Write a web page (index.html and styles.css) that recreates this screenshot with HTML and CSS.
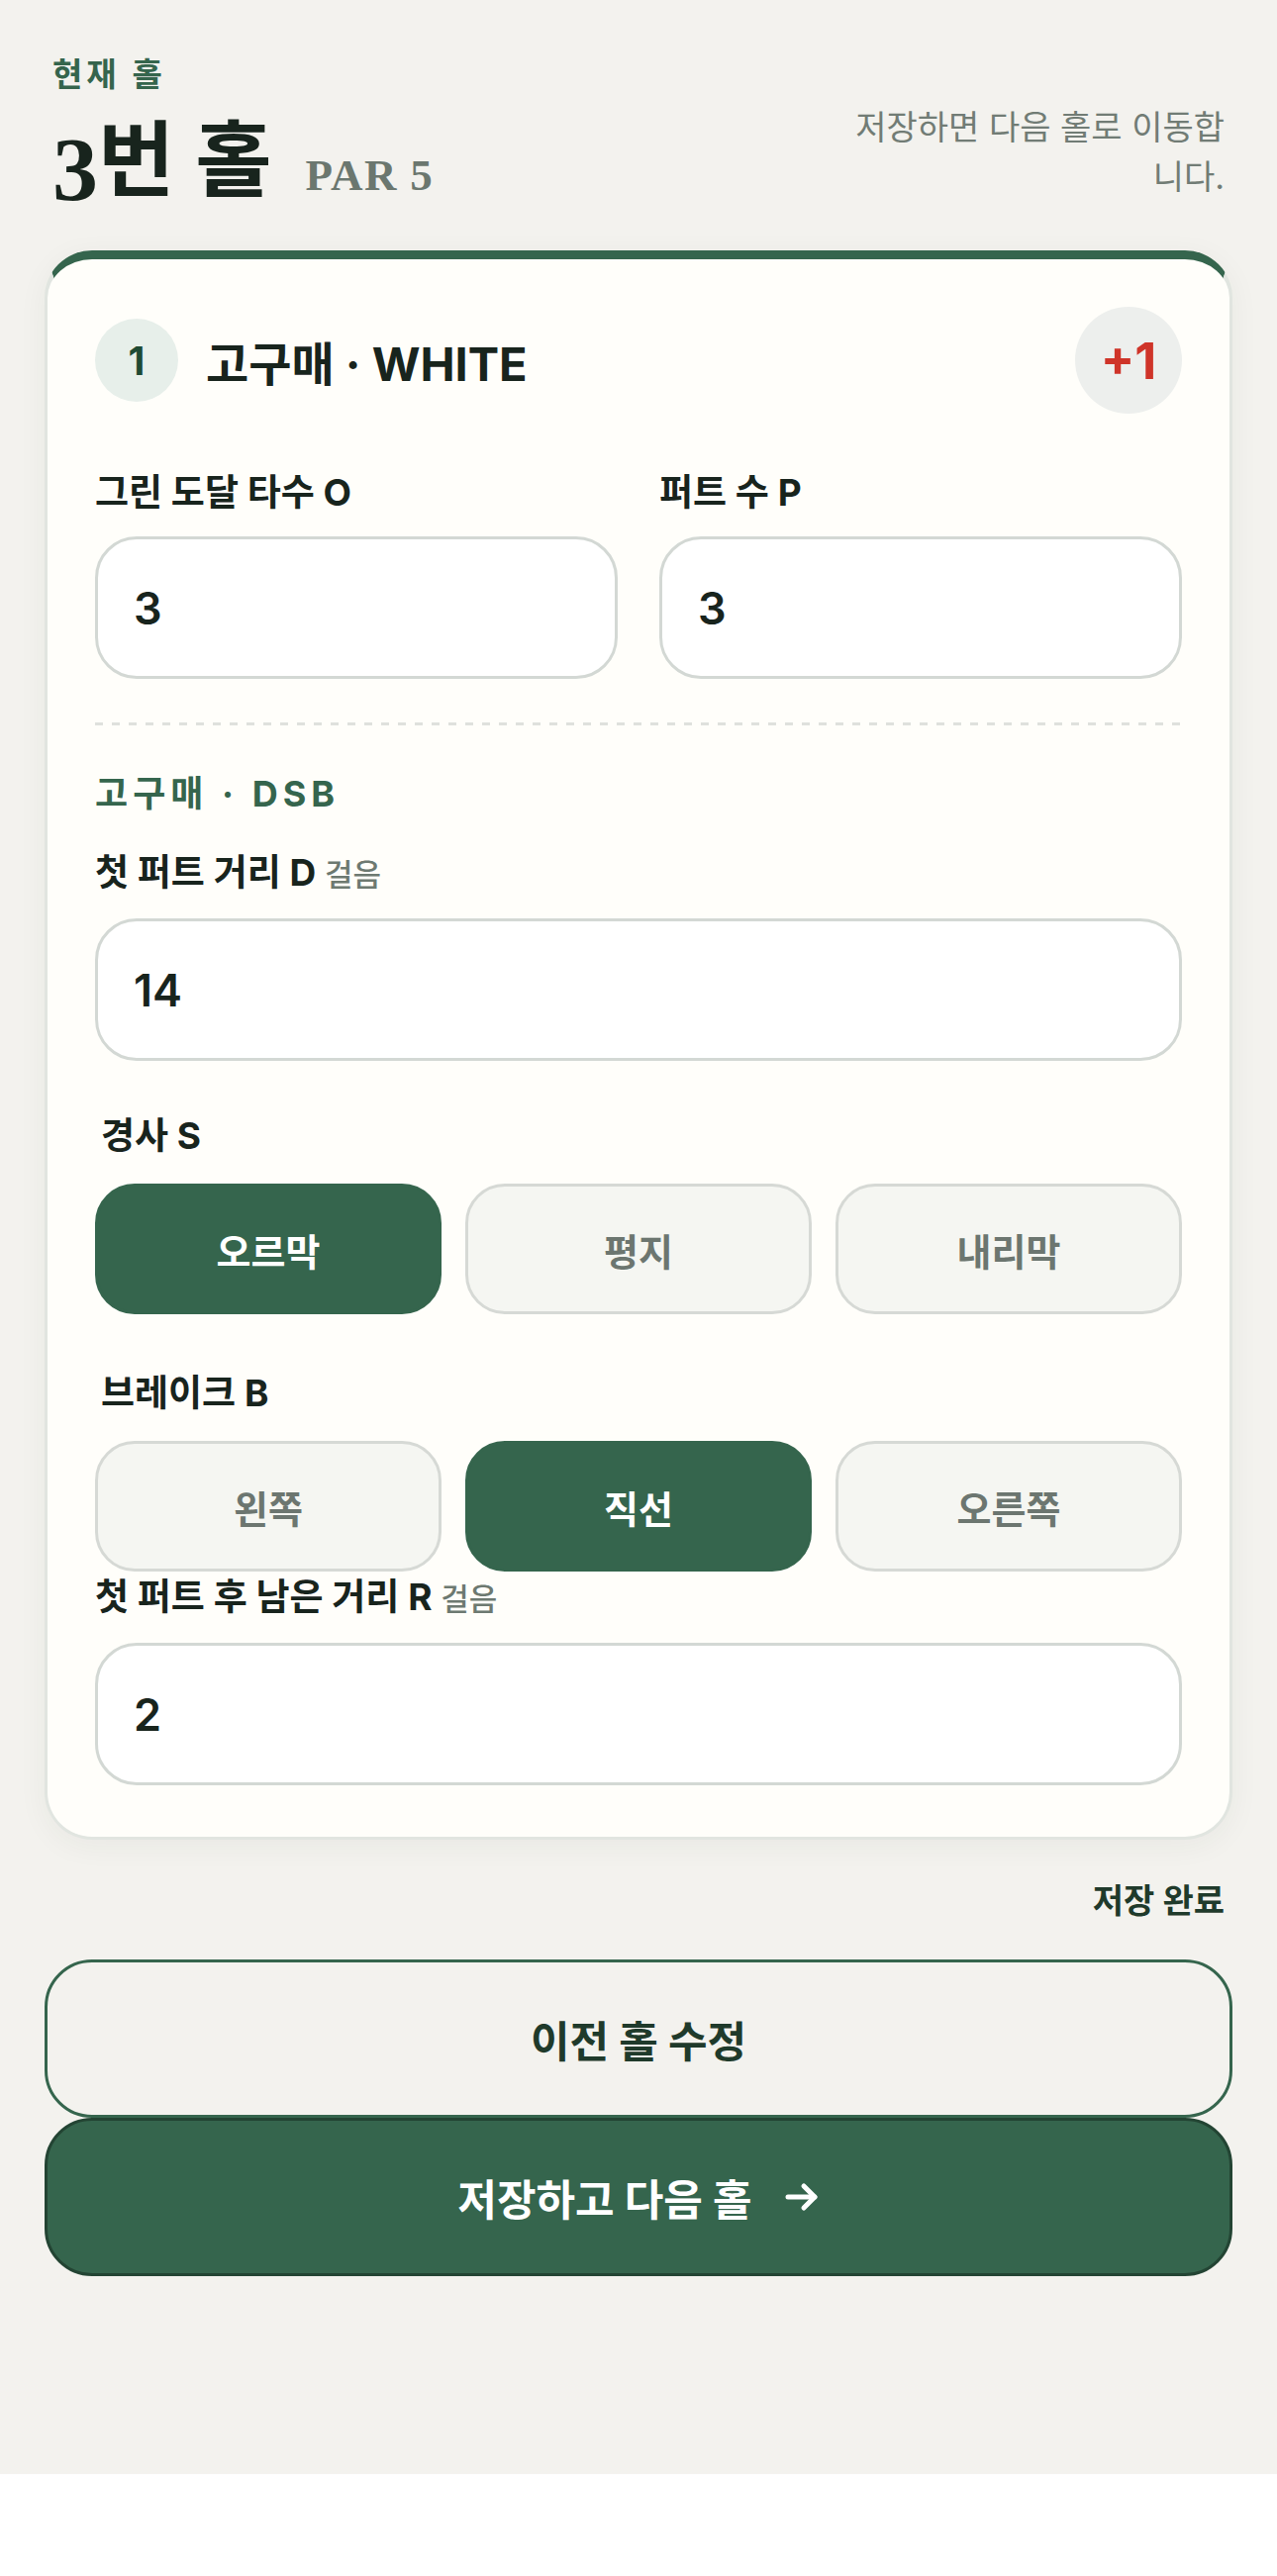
FILE: index.html
```html
<!DOCTYPE html>
<html lang="ko">
<head>
	<meta charset="UTF-8">
	<title>3번 홀</title>
	<link rel="stylesheet" href="styles.css">
</head>
<body>
	<div class="page">
		<header class="head">
			<div class="head-left">
				<div class="eyebrow">현재 홀</div>
				<h1 class="title"><span class="title-num">3</span>번 홀<span class="par">PAR 5</span></h1>
			</div>
			<p class="hint">저장하면 다음 홀로 이동합니다.</p>
		</header>

		<section class="card">
			<div class="player">
				<span class="player-no">1</span>
				<span class="player-name">고구매 · WHITE</span>
				<span class="player-diff">+1</span>
			</div>

			<div class="pair">
				<div class="field">
					<label class="label" for="gir">그린 도달 타수 O</label>
					<input class="input" type="text" id="gir" value="3">
				</div>
				<div class="field">
					<label class="label" for="putts">퍼트 수 P</label>
					<input class="input" type="text" id="putts" value="3">
				</div>
			</div>

			<div class="divider"></div>

			<div class="section-title">고구매 · DSB</div>

			<div class="field field-d">
				<label class="label" for="dist">첫 퍼트 거리 D <span class="unit">걸음</span></label>
				<input class="input" type="text" id="dist" value="14">
			</div>

			<div class="field field-s">
				<div class="label label-seg">경사 S</div>
				<div class="seg">
					<button class="seg-btn active">오르막</button>
					<button class="seg-btn">평지</button>
					<button class="seg-btn">내리막</button>
				</div>
			</div>

			<div class="field field-b">
				<div class="label label-seg">브레이크 B</div>
				<div class="seg">
					<button class="seg-btn">왼쪽</button>
					<button class="seg-btn active">직선</button>
					<button class="seg-btn">오른쪽</button>
				</div>
			</div>

			<div class="field field-r">
				<label class="label" for="rest">첫 퍼트 후 남은 거리 R <span class="unit">걸음</span></label>
				<input class="input" type="text" id="rest" value="2">
			</div>
		</section>

		<div class="status">저장 완료</div>

		<button class="btn btn-outline">이전 홀 수정</button>
		<button class="btn btn-primary">저장하고 다음 홀
			<svg class="arrow" width="36" height="30" viewBox="0 0 36 30" fill="none" stroke="#fff" stroke-width="5" stroke-linecap="round" stroke-linejoin="round">
				<path d="M4 15h27"/>
				<path d="M20 4l11 11-11 11"/>
			</svg>
		</button>
	</div>
</body>
</html>
```

FILE: styles.css
```css
* {
	margin: 0;
	padding: 0;
	box-sizing: border-box;
}

html,
body {
	background: #fff;
}

body {
	font-family: "Inter", "Noto Sans CJK KR", sans-serif;
	color: #18241d;
}

.page {
	background: #f3f2ee;
	padding: 53px 45px 200px;
}

/* 상단 */
.head {
	display: flex;
	justify-content: space-between;
	align-items: flex-end;
	padding: 0 8px;
}

.eyebrow {
	font-size: 33px;
	line-height: 44px;
	font-weight: 700;
	letter-spacing: 0.12em;
	color: #35654d;
}

.title {
	margin-top: 21px;
	font-family: "Liberation Serif", "Noto Sans CJK KR", serif;
	font-size: 84px;
	line-height: 92px;
	font-weight: 700;
	color: #18241d;
}

/* 숫자는 올드스타일처럼 살짝 내려앉게 */
.title .title-num {
	font-size: 92px;
	line-height: 0;
	vertical-align: -10px;
}

.title .par {
	margin-left: 34px;
	font-size: 45px;
	line-height: 1;
	letter-spacing: 0.03em;
	color: #6b776f;
}

.hint {
	width: 390px;
	margin-bottom: 6px;
	text-align: right;
	font-size: 34px;
	line-height: 50px;
	color: #717c75;
}

/* 카드 */
.card {
	margin-top: 43px;
	background: #fffefa;
	border: 3px solid #e1e5e0;
	border-top: 9px solid #35654d;
	border-radius: 48px;
	padding: 48px 48px 52px;
	box-shadow: 0 6px 30px rgba(40, 50, 40, 0.05);
}

.player {
	display: flex;
	align-items: center;
	height: 108px;
}

.player-no {
	width: 84px;
	height: 84px;
	border-radius: 50%;
	background: #e7efea;
	color: #1f4a33;
	font-size: 39px;
	font-weight: 700;
	display: flex;
	align-items: center;
	justify-content: center;
}

.player-name {
	margin-left: 28px;
	font-size: 47px;
	font-weight: 700;
}

.player-diff {
	margin-left: auto;
	width: 108px;
	height: 108px;
	border-radius: 50%;
	background: #edefed;
	color: #cf3429;
	font-size: 51px;
	font-weight: 700;
	display: flex;
	align-items: center;
	justify-content: center;
}

.pair {
	display: grid;
	grid-template-columns: 1fr 1fr;
	gap: 42px;
	margin-top: 56px;
}

.label {
	display: block;
	font-size: 37px;
	line-height: 48px;
	font-weight: 700;
	margin-bottom: 20px;
}

.label .unit {
	font-size: 31px;
	font-weight: 500;
	color: #6d7971;
}

.label-seg {
	padding-left: 6px;
	margin-bottom: 24px;
}

.input {
	display: block;
	width: 100%;
	height: 144px;
	border: 3px solid #d3d8d4;
	border-radius: 42px;
	background: #fff;
	padding: 0 36px;
	font-family: inherit;
	font-size: 45px;
	font-weight: 600;
	color: #18241d;
	outline: none;
}

.divider {
	margin-top: 44px;
	height: 3px;
	background: repeating-linear-gradient(90deg, #dfe1dd 0 8px, transparent 8px 17px);
}

.section-title {
	margin-top: 45px;
	font-size: 36px;
	line-height: 48px;
	font-weight: 700;
	letter-spacing: 0.14em;
	color: #35654d;
}

.field-d {
	margin-top: 32px;
}

.field-s {
	margin-top: 52px;
}

.field-b {
	margin-top: 56px;
}

.field-r {
	margin-top: 2px;
}

.seg {
	display: grid;
	grid-template-columns: repeat(3, 1fr);
	gap: 24px;
}

.seg-btn {
	height: 132px;
	border: 3px solid #d6d9d5;
	border-radius: 40px;
	background: #f5f6f2;
	font-family: inherit;
	font-size: 38px;
	font-weight: 700;
	color: #6c7670;
	cursor: pointer;
}

.seg-btn.active {
	background: #35654d;
	border-color: #35654d;
	color: #fff;
}

/* 하단 */
.status {
	margin-top: 38px;
	padding-right: 8px;
	text-align: right;
	font-size: 34px;
	line-height: 48px;
	font-weight: 700;
	color: #1f3a2b;
}

.btn {
	display: flex;
	align-items: center;
	justify-content: center;
	width: 100%;
	height: 160px;
	border-radius: 48px;
	font-family: inherit;
	font-size: 43px;
	font-weight: 700;
	cursor: pointer;
}

.btn-outline {
	margin-top: 35px;
	background: transparent;
	border: 3px solid #35654d;
	color: #1f3a2b;
}

.btn-primary {
	background: #35654d;
	border: 3px solid #234433;
	color: #fff;
}

.btn-primary .arrow {
	margin-left: 32px;
}
```
